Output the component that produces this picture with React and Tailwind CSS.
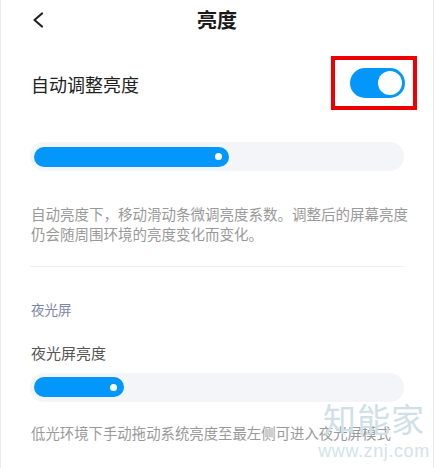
import React from "react";

const FONT = '"Noto Sans CJK SC", "Noto Sans", sans-serif';

function Slider({ fill }) {
  return (
    <div className="h-[29px] w-full rounded-full bg-[#f3f5f8] px-[4px] py-[4px] flex items-center">
      <div
        className="h-[20px] rounded-full bg-[#0397fb] flex items-center justify-end pr-[7px]"
        style={{ width: fill }}
      >
        <div className="h-[7px] w-[7px] rounded-full bg-white" />
      </div>
    </div>
  );
}

export default function App() {
  return (
    <div
      className="relative w-[434px] h-[468px] overflow-hidden bg-white border-l border-r border-[#ececec]"
      style={{ fontFamily: FONT }}
    >
      {/* header */}
      <div className="grid grid-cols-[1fr_auto_1fr] items-center h-[40px] px-[29px]">
        <svg width="14" height="16" viewBox="0 0 14 16" className="ml-[1px]">
          <path d="M11 1.5 L3.5 8 L11 14.5" fill="none" stroke="#222" strokeWidth="2.2" strokeLinecap="round" strokeLinejoin="round" />
        </svg>
        <div className="text-[20px] font-semibold text-[#1a1a1a] leading-none">亮度</div>
        <div />
      </div>

      {/* auto brightness row */}
      <div className="mt-[16px] flex items-center justify-between pl-[30px] pr-[16px] h-[54px]">
        <span className="text-[18px] text-[#222] leading-none mt-[2px]">自动调整亮度</span>
        <div className="w-[86px] h-[54px] border-[4px] border-[#ef0000] flex items-center pl-[15px]">
          <div className="w-[55px] h-[30px] rounded-full bg-[#0397fb] flex items-center justify-end pr-[3px]">
            <div className="w-[24px] h-[24px] rounded-full bg-white" />
          </div>
        </div>
      </div>

      <div className="px-[29px]">
        <div className="mt-[32px]">
          <Slider fill="195px" />
        </div>

        <p className="mt-[33px] pl-[1px] text-[14.5px] leading-[20px] text-[#999] whitespace-nowrap">
          自动亮度下，移动滑动条微调亮度系数。调整后的屏幕亮度
          <br />
          仍会随周围环境的亮度变化而变化。
        </p>

        <div className="mt-[22px] h-px bg-[#eeeeee]" />

        <div className="mt-[36px] pl-[1px] text-[13.5px] leading-none text-[#7e85a8]">夜光屏</div>

        <div className="mt-[28px] pl-[1px] text-[15px] leading-none text-[#555]">夜光屏亮度</div>

        <div className="mt-[13px]">
          <Slider fill="90px" />
        </div>

        <p className="mt-[21px] pl-[1px] text-[14.4px] leading-[20px] text-[#999] whitespace-nowrap">
          低光环境下手动拖动系统亮度至最左侧可进入夜光屏模式
        </p>
      </div>

      {/* site watermark */}
      <div className="absolute left-[320px] top-[402px] w-[106px] flex flex-col items-center pointer-events-none">
        <span className="text-[33px] leading-none tracking-[1px] text-[#cfe1e6] whitespace-nowrap">知能家</span>
        <span
          className="mt-[7px] text-[18px] leading-none tracking-[0.6px] text-[#d3e3e8] whitespace-nowrap"
          style={{ fontFamily: '"Liberation Sans", sans-serif' }}
        >
          www.znj.com
        </span>
      </div>
    </div>
  );
}
